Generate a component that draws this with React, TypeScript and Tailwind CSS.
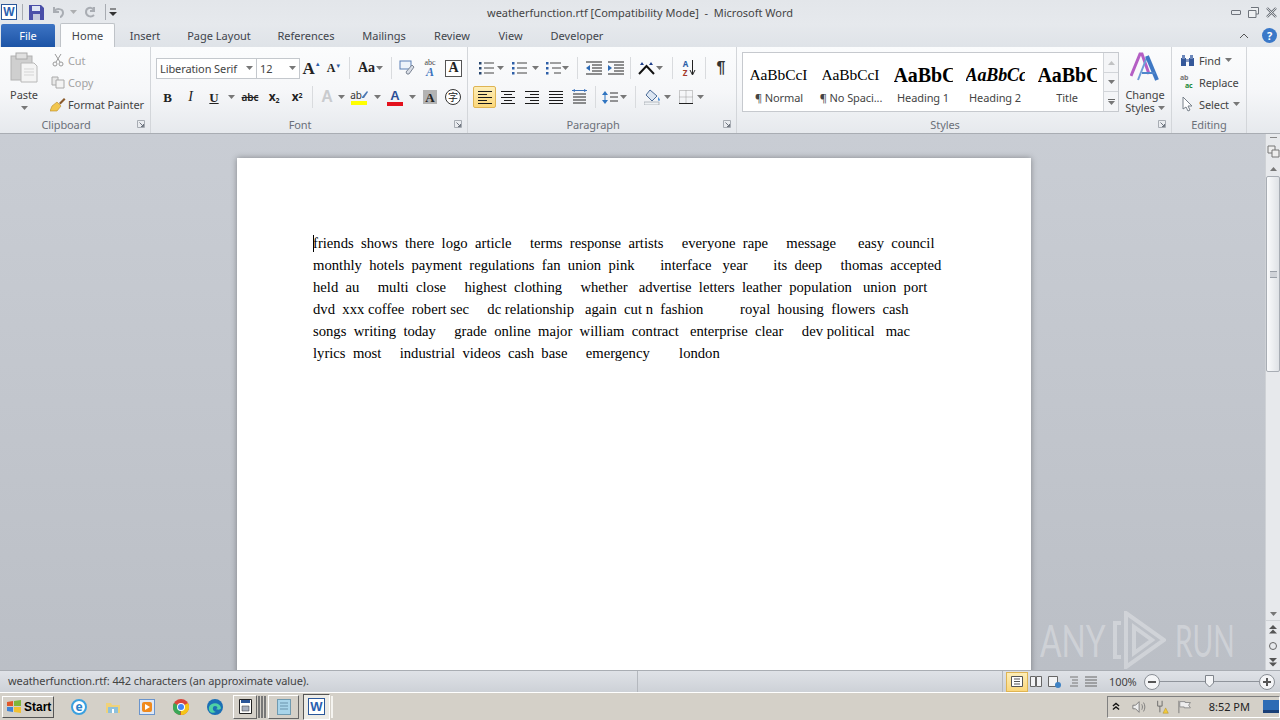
import React from 'react';

const uiFont = "font-['Noto_Sans','Open_Sans',sans-serif]";

const docLines = [
  'friends  shows  there  logo  article     terms  response  artists     everyone  rape     message      easy  council',
  'monthly  hotels  payment  regulations  fan  union  pink       interface   year       its  deep     thomas  accepted',
  'held  au     multi  close     highest  clothing     whether   advertise  letters  leather  population   union  port',
  'dvd  xxx coffee  robert sec     dc relationship   again  cut n  fashion          royal  housing  flowers  cash',
  'songs  writing  today     grade  online  major  william  contract   enterprise  clear     dev political   mac',
  'lyrics  most     industrial  videos  cash  base     emergency        london',
];

const tabs = [
  { label: 'Insert', width: 'w-[60px]' },
  { label: 'Page Layout', width: 'w-[88px]' },
  { label: 'References', width: 'w-[86px]' },
  { label: 'Mailings', width: 'w-[70px]' },
  { label: 'Review', width: 'w-[66px]' },
  { label: 'View', width: 'w-[51px]' },
  { label: 'Developer', width: 'w-[82px]' },
];

const galleryItems = [
  { sample: 'AaBbCcI', name: '¶ Normal', cls: 'text-[15.5px] font-normal' },
  { sample: 'AaBbCcI', name: '¶ No Spaci...', cls: 'text-[15.5px] font-normal' },
  { sample: 'AaBbCc', name: 'Heading 1', cls: 'text-[20px] font-bold' },
  { sample: 'AaBbCc', name: 'Heading 2', cls: 'text-[18px] font-bold italic' },
  { sample: 'AaBbCc', name: 'Title', cls: 'text-[20px] font-bold' },
];

function Arrow({ className = '' }: { className?: string }) {
  return (
    <svg width="7" height="4" viewBox="0 0 7 4" className={`shrink-0 ${className}`}>
      <path d="M0 0h7L3.5 4z" fill="#777" />
    </svg>
  );
}

function Sep() {
  return <div className="w-px h-[22px] bg-[#d9dbde]" />;
}

function Launcher() {
  return (
    <svg width="10" height="10" viewBox="0 0 10 10" className="mr-[4px]">
      <path d="M1.5 1.5h7v7h-7z" fill="none" stroke="#a7acb3" />
      <path d="M3.5 3.5l4 4M7.5 5v2.5H5" fill="none" stroke="#6f7680" />
    </svg>
  );
}

function Group({ label, width, launcher = true, children }: { label: string; width: string; launcher?: boolean; children: React.ReactNode }) {
  return (
    <div className={`${width} shrink-0 h-full flex flex-col border-r border-[#d3d6da]`}>
      <div className="h-[71px] flex flex-col">{children}</div>
      <div className="h-[15px] flex items-start pt-px">
        <span className={`flex-1 text-center text-[11px] leading-none text-[#6b7079] ${launcher ? 'pr-[4px]' : ''}`}>{label}</span>
        {launcher && <Launcher />}
      </div>
    </div>
  );
}

function Lines({ kind }: { kind: 'left' | 'center' | 'right' | 'justify' }) {
  const inset = kind === 'right' ? 5 : kind === 'center' ? 3 : 0;
  const short = kind === 'justify' ? 14 : kind === 'center' ? 8 : 9;
  return (
    <svg width="14" height="13" viewBox="0 0 14 13">
      {[0, 1, 2, 3, 4].map((i) => (
        <rect key={i} x={i % 2 ? inset : 0} y={i * 3} width={i % 2 ? short : 14} height="1" fill="#1a1a1a" />
      ))}
    </svg>
  );
}

function ListIcon({ kind }: { kind: 'bullet' | 'number' | 'multi' }) {
  const color = kind === 'bullet' ? '#27466f' : '#2d5fa8';
  return (
    <svg width="16" height="15" viewBox="0 0 16 15">
      <rect x="1" y="1" width="2.500" height="2.500" fill={color} />
      <rect x="1" y="6" width="2.500" height="2.500" fill={color} />
      <rect x="1" y="11" width="2.500" height="2.500" fill={color} />
      <path d={kind === 'multi' ? 'M5 2h11M7 7h9M9 12h7' : 'M6 2h10M6 7h10M6 12h10'} stroke="#444" strokeWidth="1" />
    </svg>
  );
}

function Indent({ flip }: { flip?: boolean }) {
  return (
    <svg width="16" height="14" viewBox="0 0 16 14">
      <path d="M0 1h16M6 4h10M6 7h10M6 10h10M0 13h16" stroke="#222" />
      <path d={flip ? 'M0 4l4 3-4 3z' : 'M4 4L0 7l4 3z'} fill="#2c6ab5" />
    </svg>
  );
}

function Clipboard() {
  return (
    <svg width="28" height="31" viewBox="0 0 28 31">
      <rect x="1" y="4" width="21" height="24" fill="#cfcfcf" stroke="#b2b2b2" />
      <rect x="6" y="1" width="11" height="6" fill="#e0e0e0" stroke="#aaa" />
      <path d="M11 11h13l3 3v16H11z" fill="#f4f4f4" stroke="#b8b8b8" />
      <path d="M14 17h10M14 20h10M14 23h10" stroke="#d5d5d5" />
    </svg>
  );
}

function Ribbon() {
  return (
    <div className="h-[88px] flex border-y border-[#a9adb3] border-t-[#c2c5ca] bg-gradient-to-b from-[#fbfcfd] via-[#f6f7f9] to-[#e6e9ed] text-[#444] tracking-[-0.1px]">
      <Group label="Clipboard" width="w-[151px]">
        <div className="flex h-full">
          <div className="w-[48px] flex flex-col items-center pt-[5px]">
            <Clipboard />
            <span className="text-[11px] leading-none mt-[6px]">Paste</span>
            <Arrow className="mt-[6px]" />
          </div>
          <div className="flex flex-col pl-[2px] pt-[2px] text-[11px] leading-none">
            <div className="h-[22px] flex items-center gap-[2px] text-[#a3a3a3]">
              <span className="w-[16px] flex justify-center">
                <svg width="12" height="14" viewBox="0 0 12 14"><path d="M3 1l5 8M9 1L4 9" stroke="#9a9a9a" fill="none" /><circle cx="3" cy="11" r="2" fill="none" stroke="#9a9a9a" /><circle cx="9" cy="11" r="2" fill="none" stroke="#9a9a9a" /></svg>
              </span>
              <span>Cut</span>
            </div>
            <div className="h-[22px] flex items-center gap-[2px] text-[#a3a3a3]">
              <span className="w-[16px] flex justify-center">
                <svg width="14" height="13" viewBox="0 0 14 13"><path d="M1 1h6v8H1z" fill="#e8e8e8" stroke="#aaa" /><path d="M5 4h8v8H5z" fill="#f4f4f4" stroke="#aaa" /></svg>
              </span>
              <span>Copy</span>
            </div>
            <div className="h-[22px] flex items-center gap-[2px] whitespace-nowrap">
              <span className="w-[16px] flex justify-center">
                <svg width="16" height="15" viewBox="0 0 16 15"><path d="M9 6l5-5 1.500 1.500-5 5z" fill="#8a5a2b" /><path d="M2 9l5-4 4 4-4 5H0z" fill="#f1c64f" stroke="#b98a26" strokeWidth=".6" /></svg>
              </span>
              <span>Format Painter</span>
            </div>
          </div>
        </div>
      </Group>

      <Group label="Font" width="w-[317px]">
        <div className="flex items-center h-[32px] pl-[5px] pt-[10px]">
          <div className="w-[101px] h-[21px] border border-[#c4c8cd] bg-white flex items-center pl-[3px] text-[11px] leading-none">
            <span className="flex-1">Liberation Serif</span>
            <Arrow className="mr-[3px]" />
          </div>
          <div className="w-[44px] h-[21px] -ml-px border border-[#c4c8cd] bg-white flex items-center pl-[3px] text-[11px] leading-none">
            <span className="flex-1">12</span>
            <Arrow className="mr-[3px]" />
          </div>
          <div className="flex items-center font-['Liberation_Serif',serif] font-bold text-[#222]">
            <span className="w-[23px] flex justify-center items-start text-[17px] leading-none">A<span className="text-[6px] leading-[8px] text-[#2c5ea8]">▲</span></span>
            <span className="w-[22px] flex justify-center items-start text-[12px] leading-none">A<span className="text-[6px] leading-[8px] text-[#2c5ea8]">▼</span></span>
          </div>
          <div className="w-[8px] flex justify-center"><Sep /></div>
          <div className="w-[34px] flex items-center gap-[1px] font-['Liberation_Serif',serif] font-bold text-[14px] leading-none text-[#222] pl-[5px]">Aa<Arrow /></div>
          <div className="w-[8px] flex justify-center"><Sep /></div>
          <div className="w-[24px] flex justify-center">
            <svg width="16" height="16" viewBox="0 0 16 16"><rect x="1" y="1" width="11" height="8" fill="#eef3fa" stroke="#5a7fb5" /><path d="M7 12l6-7 2 2-5 7H8z" fill="#d8dde6" stroke="#7c8594" /></svg>
          </div>
          <div className="w-[22px] flex flex-col items-center font-['Liberation_Serif',serif]">
            <span className="text-[8px] leading-[8px] text-[#444]">abc</span>
            <span className="text-[12px] leading-[11px] font-bold italic text-[#3a72bd]">A</span>
          </div>
          <div className="w-[17px] h-[17px] ml-[4px] border border-[#555] bg-white flex items-center justify-center font-['Liberation_Serif',serif] font-bold text-[14px] leading-none text-[#222]">A</div>
        </div>
        <div className="flex items-center h-[26px] pl-[5px] mt-[5px] text-[#222]">
          <span className="w-[23px] text-center font-['Liberation_Serif',serif] font-bold text-[13px] leading-none">B</span>
          <span className="w-[23px] text-center font-['Liberation_Serif',serif] italic text-[14px] leading-none">I</span>
          <span className="w-[24px] text-center font-['Liberation_Serif',serif] font-bold underline text-[13px] leading-none">U</span>
          <span className="w-[10px] flex justify-center"><Arrow /></span>
          <span className="w-[24px] ml-[2px] text-center text-[10px] leading-none font-semibold line-through">abc</span>
          <span className="w-[24px] text-center font-bold text-[12px] leading-none">x<sub className="text-[7px]">2</sub></span>
          <span className="w-[22px] text-center font-bold text-[12px] leading-none">x<sup className="text-[7px]">2</sup></span>
          <div className="w-[8px] flex justify-center"><Sep /></div>
          <span className="w-[22px] text-center font-['Liberation_Sans',sans-serif] font-bold text-[16px] leading-none text-[#c9cbce]">A</span>
          <span className="w-[6px] flex justify-center"><Arrow /></span>
          <div className="w-[30px] flex flex-col items-center">
            <span className="flex items-center text-[10px] leading-none text-[#333]">ab
              <svg width="6" height="8" viewBox="0 0 6 8"><path d="M5 0l1 1-4 6H0V6z" fill="#4a78b5" /></svg>
            </span>
            <span className="w-[16px] h-[4px] bg-[#ffff00] mt-[1px]" />
          </div>
          <span className="w-[6px] flex justify-center"><Arrow /></span>
          <div className="w-[30px] flex flex-col items-center">
            <span className="font-['Liberation_Sans',sans-serif] font-bold text-[13px] leading-none text-[#2b4f96]">A</span>
            <span className="w-[16px] h-[4px] bg-[#e3101c]" />
          </div>
          <span className="w-[4px] flex justify-center"><Arrow /></span>
          <div className="w-[14px] h-[14px] ml-[9px] bg-[#b3b3b3] flex items-center justify-center font-['Liberation_Serif',serif] font-bold text-[13px] leading-none text-[#222]">A</div>
          <div className="w-[16px] h-[16px] ml-[8px] rounded-full border border-[#333] bg-white flex items-center justify-center text-[10px] leading-none font-['Noto_Sans_CJK_SC',sans-serif]">字</div>
        </div>
      </Group>

      <Group label="Paragraph" width="w-[269px]">
        <div className="flex items-center h-[32px] pl-[10px] pt-[10px]">
          <span className="w-[16px] flex justify-center"><ListIcon kind="bullet" /></span>
          <span className="w-[12px] flex justify-center"><Arrow /></span>
          <span className="w-[26px] flex justify-center"><ListIcon kind="number" /></span>
          <span className="w-[6px] flex justify-center"><Arrow /></span>
          <span className="w-[18px] ml-[6px] flex justify-center"><ListIcon kind="multi" /></span>
          <span className="w-[6px] flex justify-center"><Arrow /></span>
          <div className="w-[18px] flex justify-center"><Sep /></div>
          <span className="w-[16px] flex justify-center"><Indent /></span>
          <span className="w-[16px] ml-[6px] flex justify-center"><Indent flip /></span>
          <div className="w-[12px] flex justify-center"><Sep /></div>
          <span className="w-[17px] ml-[2px] flex justify-center">
            <svg width="17" height="14" viewBox="0 0 17 14"><path d="M1 13L8.500 5 16 13" fill="none" stroke="#111" strokeWidth="2" /><path d="M2 4l2-3 2 3zM11 4l2-3 2 3z" fill="#1e3f8a" /></svg>
          </span>
          <span className="w-[8px] flex justify-center"><Arrow /></span>
          <div className="w-[18px] flex justify-center"><Sep /></div>
          <span className="w-[17px] flex items-center justify-center gap-[1px]">
            <span className="flex flex-col text-[8px] leading-[9px] font-bold">
              <span className="text-[#2c5ea8]">A</span>
              <span className="text-[#a33a2a]">Z</span>
            </span>
            <svg width="7" height="16" viewBox="0 0 7 16"><path d="M3.500 0v14M1 10l2.500 5L6 10" fill="none" stroke="#222" /></svg>
          </span>
          <div className="w-[14px] flex justify-center"><Sep /></div>
          <span className="w-[18px] text-center font-['Liberation_Sans',sans-serif] font-bold text-[16px] leading-none text-[#333]">¶</span>
        </div>
        <div className="flex items-center h-[26px] pl-[5px] mt-[5px]">
          <span className="w-[23px] h-[22px] flex items-center justify-center rounded-[2px] border border-[#dfb453] bg-gradient-to-b from-[#fdeeb8] to-[#fbd77a]"><Lines kind="left" /></span>
          <span className="w-[24px] flex justify-center"><Lines kind="center" /></span>
          <span className="w-[24px] flex justify-center"><Lines kind="right" /></span>
          <span className="w-[24px] flex justify-center"><Lines kind="justify" /></span>
          <span className="w-[22px] flex justify-center">
            <svg width="15" height="16" viewBox="0 0 15 16"><path d="M1 5h13M1 8h13M1 11h13M1 14h13" stroke="#222" /><path d="M0 1.500h15" stroke="#3b74bd" /><path d="M3 0L0 1.500 3 3zM12 0l3 1.500L12 3z" fill="#3b74bd" /></svg>
          </span>
          <div className="w-[10px] flex justify-center"><Sep /></div>
          <span className="w-[20px] flex justify-center">
            <svg width="16" height="15" viewBox="0 0 16 15"><path d="M3 1L0 5h6zM3 14L0 10h6z" fill="#2f74c0" /><path d="M3 4v7" stroke="#2f74c0" /><path d="M8 3h8M8 7h8M8 11h8" stroke="#333" /></svg>
          </span>
          <span className="w-[6px] flex justify-center"><Arrow /></span>
          <div className="w-[18px] flex justify-center"><Sep /></div>
          <span className="w-[17px] flex justify-center">
            <svg width="17" height="16" viewBox="0 0 17 16"><path d="M6 1l7 6-5 5-6-6z" fill="#dce6f2" stroke="#4c6c98" /><path d="M14 8s2 2 2 3-2 1-2 0 0-3 0-3z" fill="#4c8fd6" /><rect x="0" y="13" width="15" height="3" fill="#eef1f4" stroke="#8f979f" strokeWidth=".6" /></svg>
          </span>
          <span className="w-[12px] flex justify-center"><Arrow /></span>
          <span className="w-[26px] flex justify-center">
            <svg width="14" height="14" viewBox="0 0 14 14"><path d="M.5.5h13v13H.5zM7 .5v13M.5 7h13" fill="none" stroke="#9a9a9a" strokeDasharray="1 1" /><path d="M0 13.500h14" stroke="#222" /></svg>
          </span>
          <span className="w-[2px] flex justify-center"><Arrow /></span>
        </div>
      </Group>

      <Group label="Styles" width="w-[435px]">
        <div className="flex h-full pl-[5px] pt-[5px]">
          <div className="w-[377px] h-[60px] border border-[#c6c9ce] bg-white flex">
            {galleryItems.map((s) => (
              <div key={s.name} className="w-[72px] flex flex-col items-center">
                <div className={`h-[34px] w-[59px] overflow-hidden whitespace-nowrap flex items-center pt-[10px] font-['Liberation_Serif',serif] leading-none text-black ${s.cls}`}>{s.sample}</div>
                <span className="text-[11px] leading-none mt-[5px] whitespace-nowrap">{s.name}</span>
              </div>
            ))}
            <div className="ml-auto w-[15px] flex flex-col border-l border-[#d2d5d9] bg-[#f4f5f7]">
              <div className="h-[20px] flex items-center justify-center border-b border-[#d2d5d9]"><Arrow className="rotate-180 opacity-40" /></div>
              <div className="h-[19px] flex items-center justify-center border-b border-[#d2d5d9]"><Arrow /></div>
              <div className="flex-1 flex flex-col items-center justify-center gap-[1px]"><span className="w-[7px] h-px bg-[#666]" /><Arrow /></div>
            </div>
          </div>
          <div className="w-[50px] flex flex-col items-center text-[11px] leading-[13px] ml-[1px]">
            <svg width="31" height="29" viewBox="0 0 31 29">
              <path d="M1 24L10 2h2l7 20" fill="none" stroke="#b45fc4" strokeWidth="3" />
              <path d="M8 28L17 5" fill="none" stroke="#6f9fd8" strokeWidth="2" />
              <path d="M17 4l10 24" fill="none" stroke="#3f78c4" strokeWidth="4" />
              <path d="M12 21h13" stroke="#4f86cc" strokeWidth="2" />
            </svg>
            <span className="mt-[7px]">Change</span>
            <span className="flex items-center gap-[3px]">Styles<Arrow /></span>
          </div>
        </div>
      </Group>

      <Group label="Editing" width="w-[75px]" launcher={false}>
        <div className="flex flex-col pl-[8px] pt-[2px] text-[11px] leading-none">
          <div className="h-[22px] flex items-center gap-[4px]">
            <svg width="15" height="13" viewBox="0 0 15 13"><rect x="1" y="4" width="5" height="8" fill="#35589a" /><rect x="9" y="4" width="5" height="8" fill="#35589a" /><rect x="2" y="1" width="3" height="4" fill="#6b87bb" /><rect x="10" y="1" width="3" height="4" fill="#6b87bb" /><rect x="6" y="5" width="3" height="3" fill="#889cc4" /></svg>
            <span>Find</span><Arrow />
          </div>
          <div className="h-[22px] flex items-center gap-[4px]">
            <span className="w-[15px] flex flex-col text-[7px] leading-[8px] font-bold">
              <span className="text-[#777]">ab</span>
              <span className="text-[#1f8a3a] pl-[5px]">ac</span>
            </span>
            <span>Replace</span>
          </div>
          <div className="h-[22px] flex items-center gap-[4px]">
            <svg width="15" height="16" viewBox="0 0 15 16"><path d="M3 1v12l3-2 2 4 2-1-2-4h4z" fill="#fff" stroke="#78808a" /></svg>
            <span>Select</span><Arrow />
          </div>
        </div>
      </Group>
    </div>
  );
}

function Scrollbar() {
  return (
    <div className="w-[15px] shrink-0 flex flex-col items-center bg-[#e7e9ec] border-l border-[#cfd2d6]">
      <div className="h-[6px] w-full flex items-center justify-center"><span className="w-[7px] h-px bg-[#888]" /></div>
      <div className="h-[22px] w-full flex items-center justify-center">
        <svg width="13" height="13" viewBox="0 0 13 13"><path d="M1 1h7v7H1z" fill="#eee" stroke="#777" /><path d="M5 5h7v7H5z" fill="#eee" stroke="#777" /></svg>
      </div>
      <div className="h-[14px] flex items-center"><Arrow className="rotate-180" /></div>
      <div className="w-[14px] h-[196px] border border-[#a8adb4] rounded-[2px] bg-gradient-to-r from-[#fafbfc] to-[#dfe2e6] flex items-center justify-center">
        <span className="w-[7px] h-[7px] border-y border-[#9aa0a8] bg-[#d0d3d8]" />
      </div>
      <div className="flex-1" />
      <div className="h-[20px] flex items-end pb-[4px]"><Arrow /></div>
      <div className="h-[17px] w-full flex items-center justify-center border-t border-[#cfd2d6]">
        <svg width="8" height="9" viewBox="0 0 8 9"><path d="M0 4l4-4 4 4zM0 8.500l4-4 4 4z" fill="#555" /></svg>
      </div>
      <div className="h-[17px] flex items-center"><span className="w-[8px] h-[8px] rounded-full border border-[#666]" /></div>
      <div className="h-[16px] flex items-center">
        <svg width="8" height="9" viewBox="0 0 8 9"><path d="M0 0h8L4 4zM0 4.500h8l-4 4z" fill="#555" /></svg>
      </div>
    </div>
  );
}

function TaskIcon({ children }: { children: React.ReactNode }) {
  return <div className="w-[34px] flex justify-center">{children}</div>;
}

export default function App() {
  return (
    <div className={`relative w-[1280px] h-[720px] overflow-hidden flex flex-col bg-[#e9ecef] ${uiFont}`}>
      {/* title bar */}
      <div className="h-[24px] shrink-0 flex items-center bg-gradient-to-b from-[#e3e6ea] to-[#e6e9ed] text-[#444]">
        <div className="w-[16px] h-[16px] ml-[1px] border border-[#2a5699] bg-white flex items-center justify-center font-['Liberation_Sans',sans-serif] font-bold text-[12px] leading-none text-[#2a5fb0]">W</div>
        <div className="w-px h-[16px] bg-[#a8acb2] ml-[5px]" />
        <svg width="15" height="15" viewBox="0 0 15 15" className="ml-[6px]"><path d="M0 0h12l3 3v12H0z" fill="#4a4fa8" /><rect x="3" y="1" width="8" height="5" fill="#dfe6f4" /><rect x="4" y="9" width="7" height="6" fill="#c3c8dc" /></svg>
        <svg width="13" height="12" viewBox="0 0 13 12" className="ml-[8px]"><path d="M2 1v5h5M2 6c2-4 9-4 9 1 0 2-2 4-3 4" fill="none" stroke="#a9adb3" strokeWidth="2" /></svg>
        <Arrow className="ml-[5px] opacity-50" />
        <svg width="13" height="12" viewBox="0 0 13 12" className="ml-[7px]"><path d="M10 1v4H6M10 4C7 0 2 2 2 6s5 6 8 3" fill="none" stroke="#a9adb3" strokeWidth="2" /></svg>
        <div className="w-px h-[16px] bg-[#a8acb2] ml-[8px]" />
        <svg width="8" height="8" viewBox="0 0 8 8" className="ml-[3px]"><path d="M1 1h6" stroke="#333" /><path d="M0 4h8L4 8z" fill="#333" /></svg>
        <div className="w-[370px] shrink-0" />
        <span className="text-[11px] leading-none whitespace-pre">weatherfunction.rtf [Compatibility Mode]  -  Microsoft Word</span>
        <div className="flex-1" />
        <div className="flex items-center gap-[7px] mr-[3px]">
          <span className="w-[10px] h-[5px] rounded-[1px] border border-[#6f747c]" />
          <svg width="11" height="11" viewBox="0 0 11 11"><path d="M3 .5h7.500V7H8M.5 3.500H8v7H.5z" fill="#eef0f2" stroke="#6f747c" /></svg>
          <svg width="11" height="11" viewBox="0 0 11 11"><path d="M1 1l9 9M10 1l-9 9" stroke="#6f747c" strokeWidth="2.400" /><path d="M1 1l9 9M10 1l-9 9" stroke="#eef0f2" strokeWidth=".8" /></svg>
        </div>
      </div>

      {/* tabs */}
      <div className="h-[23px] shrink-0 flex items-end text-[11px] leading-none bg-gradient-to-b from-[#e6e9ed] to-[#dfe3e8] text-[#3f444b] relative z-10 -mb-px">
        <div className="w-[54px] h-[23px] ml-px flex items-center justify-center rounded-t-[2px] bg-gradient-to-b from-[#3d74c4] to-[#1c54a6] text-white">File</div>
        <div className="w-[55px] h-[24px] ml-[5px] flex items-center justify-center rounded-t-[2px] border border-b-0 border-[#bfc3c8] bg-[#fbfcfd]">Home</div>
        {tabs.map((t) => (
          <div key={t.label} className={`${t.width} h-[23px] flex items-center justify-center`}>{t.label}</div>
        ))}
        <div className="flex-1" />
        <svg width="10" height="7" viewBox="0 0 10 7" className="mb-[8px] mr-[13px]"><path d="M1 6l4-4 4 4" fill="none" stroke="#555" /></svg>
        <div className="w-[15px] h-[15px] mb-[4px] mr-[3px] rounded-full bg-[#3a78c8] text-white font-bold text-[11px] flex items-center justify-center">?</div>
      </div>

      <Ribbon />

      {/* document */}
      <div className="flex-1 min-h-0 flex bg-gradient-to-b from-[#c9cdd4] to-[#bbbfc6]">
        <div className="flex-1 min-w-0 overflow-hidden pl-[237px] pt-[24px]">
          <div className="relative w-[794px] h-[600px] bg-white pl-[76px] pt-[74px] shadow-[0_0_6px_rgba(0,0,0,0.35)] font-['Liberation_Serif',serif] text-[14.67px] leading-[22px] text-black whitespace-pre">
            <span className="absolute left-[76px] top-[77px] w-px h-[17px] bg-black" />
            {docLines.map((line) => (
              <div key={line}>{line}</div>
            ))}
          </div>
        </div>
        <Scrollbar />
      </div>

      {/* status bar */}
      <div className="h-[22px] shrink-0 flex items-center bg-gradient-to-b from-[#dfe2e7] to-[#cdd1d7] border-t border-[#a9adb3] text-[#444] text-[11px] leading-none tracking-[-0.1px]">
        <span className="w-[638px] shrink-0 pl-[8px] pb-[2px] border-r border-[#b4b8be] h-full flex items-center">weatherfunction.rtf: 442 characters (an approximate value).</span>
        <div className="w-[365px] shrink-0 h-full border-r border-[#b4b8be]" />
        <div className="w-[22px] h-[20px] shrink-0 ml-[3px] flex items-center justify-center border border-[#dfb453] bg-gradient-to-b from-[#fdeeb8] to-[#fbd77a]">
          <svg width="12" height="11" viewBox="0 0 12 11"><path d="M.5.5h11v10H.5zM3 3h6M3 5.500h6M3 8h6" fill="#fff" stroke="#555" /></svg>
        </div>
        <div className="flex items-center gap-[6px] ml-[2px]">
          <svg width="12" height="11" viewBox="0 0 12 11"><path d="M.5.5h5v10h-5zM6.500.5h5v10h-5z" fill="#f2f3f5" stroke="#666" /></svg>
          <svg width="13" height="12" viewBox="0 0 13 12"><path d="M.5.5h9v10h-9z" fill="#f2f3f5" stroke="#666" /><circle cx="10" cy="9" r="3" fill="#3e82c4" /></svg>
          <svg width="12" height="11" viewBox="0 0 12 11"><path d="M3 1h8M5 4h6M5 7h6M3 10h8" stroke="#777" /></svg>
          <svg width="12" height="11" viewBox="0 0 12 11"><path d="M0 1h12M0 4h12M0 7h12M0 10h12" stroke="#666" /></svg>
        </div>
        <span className="ml-[12px] w-[28px] shrink-0">100%</span>
        <div className="w-[16px] h-[16px] shrink-0 ml-[7px] rounded-full border border-[#8a8f96] bg-[#f4f5f7] flex items-center justify-center"><span className="w-[8px] h-[2px] bg-[#555]" /></div>
        <div className="w-[99px] shrink-0 h-px bg-[#8f949b] flex justify-center items-center">
          <svg width="9" height="13" viewBox="0 0 9 13"><path d="M.5.5h8V8L4.500 12 .5 8z" fill="#f4f5f7" stroke="#7f848b" /></svg>
        </div>
        <div className="relative w-[16px] h-[16px] shrink-0 rounded-full border border-[#8a8f96] bg-[#f4f5f7] flex items-center justify-center">
          <span className="w-[8px] h-[2px] bg-[#555]" />
          <span className="absolute w-[2px] h-[8px] bg-[#555]" />
        </div>
      </div>

      {/* taskbar */}
      <div className="h-[28px] shrink-0 flex items-center bg-[#d4d0c8] border-t border-white">
        <div className="w-[52px] h-[22px] shrink-0 ml-[2px] flex items-center gap-[2px] pl-[3px] bg-[#d4d0c8] border border-white border-r-[#555] border-b-[#555] font-['Liberation_Sans',sans-serif] font-bold text-[12px] leading-none text-black">
          <svg width="16" height="14" viewBox="0 0 16 14"><path d="M1 2l6-1v5H1z" fill="#e0572a" /><path d="M8 1l7-1v6H8z" fill="#7eb63a" /><path d="M1 7h6v5l-6-1z" fill="#3f83d6" /><path d="M8 7h7v6l-7-1z" fill="#f1c030" /></svg>
          Start
        </div>
        <div className="flex items-center ml-[8px]">
          <TaskIcon>
            <span className="w-[16px] h-[16px] rounded-full border-[2px] border-[#3aa0e0] bg-white flex items-center justify-center text-[#2b7fc9] text-[12px] font-bold leading-none">e</span>
          </TaskIcon>
          <TaskIcon>
            <svg width="16" height="16" viewBox="0 0 16 16"><path d="M1 4h5l1 2h8v8H1z" fill="#f0d27a" /><path d="M3 8h10v6H3z" fill="#8dc0dc" /><path d="M7 10h2v4H7z" fill="#fff" /></svg>
          </TaskIcon>
          <TaskIcon>
            <svg width="16" height="16" viewBox="0 0 16 16"><rect x=".5" y=".5" width="15" height="15" fill="#dfe8f6" stroke="#6a94cc" /><rect x="3" y="3" width="10" height="10" rx="2" fill="#f08a1e" /><path d="M6 5l5 3-5 3z" fill="#fff" /></svg>
          </TaskIcon>
          <TaskIcon>
            <svg width="16" height="16" viewBox="0 0 16 16"><circle cx="8" cy="8" r="8" fill="#d9463b" /><path d="M8 8L15 4A8 8 0 0 1 8 16z" fill="#f5c518" /><path d="M8 8l-1 8A8 8 0 0 1 1 4z" fill="#3aa757" /><circle cx="8" cy="8" r="4" fill="#fff" /><circle cx="8" cy="8" r="3" fill="#4285f4" /></svg>
          </TaskIcon>
          <TaskIcon>
            <svg width="16" height="16" viewBox="0 0 16 16"><circle cx="8" cy="8" r="8" fill="#1b6fb5" /><path d="M2 8c2-5 11-5 12 1 0 2-4 2-5 1 2 0 2-3-1-3-3 0-3 5 1 6-4 2-8 0-7-5z" fill="#4fd1a5" /></svg>
          </TaskIcon>
        </div>
        <div className="w-[24px] h-[24px] shrink-0 flex items-center justify-center ml-px border border-white border-r-[#666] border-b-[#666]">
          <svg width="13" height="15" viewBox="0 0 13 15"><path d="M.5.5h12v14H.5z" fill="#fff" stroke="#222" /><path d="M2 1h9v3H2z" fill="#2a5699" /><path d="M3 7h7v5H3z" fill="#a8b0c0" stroke="#333" strokeWidth=".5" /></svg>
        </div>
        <div className="flex items-center gap-[1px] ml-px">
          <span className="w-[2px] h-[22px] bg-[#777]" />
          <span className="w-[2px] h-[22px] bg-[#777]" />
          <span className="w-[2px] h-[22px] bg-[#777]" />
        </div>
        <div className="w-[31px] h-[24px] shrink-0 flex items-center justify-center ml-[2px] border border-white border-r-[#666] border-b-[#666]">
          <svg width="14" height="17" viewBox="0 0 14 17"><rect x=".5" y="1.500" width="13" height="15" fill="#a8d4ea" stroke="#6f9ab0" /><path d="M3 5h8M3 8h8M3 11h8" stroke="#6a93ac" /></svg>
        </div>
        <div className="w-[27px] h-[26px] shrink-0 flex items-center justify-center ml-[4px] border border-[#555] border-r-white border-b-white bg-[#ecebe6]">
          <div className="w-[17px] h-[17px] border border-[#2a5699] bg-white flex items-center justify-center font-['Liberation_Sans',sans-serif] font-bold text-[13px] leading-none text-[#2a5fb0]">W</div>
        </div>
        <span className="w-[2px] h-[22px] ml-px bg-[#f5f4f0]" />
        <div className="flex-1" />
        <div className="w-[173px] h-[22px] shrink-0 flex items-center pl-[4px] border border-[#808080] border-r-white border-b-white text-[#222]">
          <svg width="9" height="9" viewBox="0 0 9 9"><path d="M1 4l3.500-3L8 4M1 8l3.500-3L8 8" fill="none" stroke="#111" strokeWidth="1.500" /></svg>
          <svg width="16" height="14" viewBox="0 0 16 14" className="ml-[12px]"><path d="M1 5h3l4-4v12l-4-4H1z" fill="#eee" stroke="#777" /><path d="M11 4c1 2 1 4 0 6M13 2c2 3 2 7 0 10" fill="none" stroke="#777" /></svg>
          <svg width="16" height="16" viewBox="0 0 16 16" className="ml-[9px]"><path d="M3 1v6h5V1M5.500 7v7" stroke="#666" fill="none" /><path d="M9 15l3-6 3 6z" fill="#f3cb3a" stroke="#a9851c" strokeWidth=".5" /></svg>
          <svg width="15" height="15" viewBox="0 0 15 15" className="ml-[9px]"><path d="M1 1v14" stroke="#777" /><path d="M2 2h6v1h6l-2 3 2 3H7V8H2z" fill="#eee" stroke="#888" /></svg>
          <span className="ml-[17px] text-[11px] leading-none whitespace-nowrap">8:52 PM</span>
          <svg width="16" height="14" viewBox="0 0 16 14" className="ml-[13px] shrink-0"><rect width="16" height="12" fill="#2d6cb5" /><rect y="10" width="16" height="3" fill="#1a3f76" /></svg>
        </div>
      </div>

      {/* watermark */}
      <div className="absolute left-[1040px] top-[610px] w-[192px] h-[60px] flex items-center font-['Lato',sans-serif] font-normal text-[44px] leading-none text-white/30 pointer-events-none">
        <span className="w-[72px] scale-x-[0.72] origin-left">ANY</span>
        <svg width="54" height="58" viewBox="0 0 54 58" className="shrink-0">
          <path d="M9 12H3v34h6M14 2v54l38-27z M22 16v26l18-13z" fill="none" stroke="#fff" strokeOpacity=".3" strokeWidth="4" />
        </svg>
        <span className="ml-[9px] w-[60px] scale-x-[0.64] origin-left">RUN</span>
      </div>
    </div>
  );
}
